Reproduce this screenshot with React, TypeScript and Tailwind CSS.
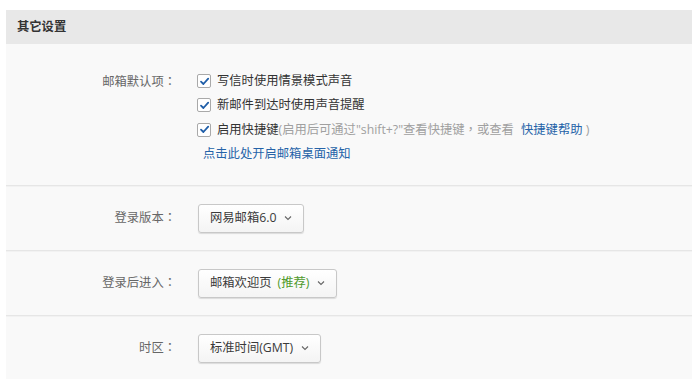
import React from 'react';

const font = { fontFamily: '"Open Sans", "Noto Sans CJK SC", sans-serif' };
const tc = { fontFamily: '"Noto Sans CJK TC", sans-serif' };

const CheckBox = () => (
  <span className="flex h-[14px] w-[14px] shrink-0 items-center justify-center rounded-[2px] border border-[#a9a9a9] bg-white">
    <svg width="11" height="11" viewBox="0 0 11 11">
      <path d="M2 5.6 L4.4 8 L9.2 2.6" fill="none" stroke="#1f5ea8" strokeWidth="1.8" strokeLinecap="round" strokeLinejoin="round" />
    </svg>
  </span>
);

const Chevron = () => (
  <svg width="8" height="6" viewBox="0 0 8 6" className="ml-[8px]">
    <path d="M1 1.5 L4 4.5 L7 1.5" fill="none" stroke="#666" strokeWidth="1.1" />
  </svg>
);

const Select = ({ children }: { children: React.ReactNode }) => (
  <div className="flex h-[29px] items-center rounded-[3px] border border-[#c8c8c8] bg-gradient-to-b from-white to-[#f4f4f4] pl-[11px] pr-[11px] text-[#3a3a3a] shadow-[0_1px_1px_rgba(0,0,0,0.12)]">
    {children}
    <Chevron />
  </div>
);

const Label = ({ text }: { text: string }) => (
  <div className="w-[170px] shrink-0 text-right text-[#666]">
    {text}
    <span style={tc}>：</span>
  </div>
);

const Row = ({ label, children }: { label: string; children: React.ReactNode }) => (
  <div className="flex h-[65px] items-center border-t border-[#e6e6e6] shadow-[inset_0_1px_0_#f2f2f2]">
    <Label text={label} />
    <div className="ml-[22px]">{children}</div>
  </div>
);

const App = () => {
  return (
    <div className="min-h-[379px] bg-white pl-[6px] pt-[10px] text-[12.3px]" style={font}>
      <div className="flex h-[34px] items-center bg-[#e8e8e8] pl-[11px] font-bold text-[#333]">其它设置</div>
      <div className="bg-[#f9f9f9]">
        <div className="flex pb-[19px] pt-[25px] leading-[24px]">
          <Label text="邮箱默认项" />
          <div className="ml-[21px] text-[#333]">
            <div className="flex items-center gap-[6px]">
              <CheckBox />
              <span>写信时使用情景模式声音</span>
            </div>
            <div className="flex items-center gap-[6px]">
              <CheckBox />
              <span>新邮件到达时使用声音提醒</span>
            </div>
            <div className="flex items-center gap-[6px]">
              <CheckBox />
              <span>
                启用快捷键
                <span className="text-[#a0a0a0]">
                  (启用后可通过"shift+?"查看快捷键<span style={tc}>，</span>或查看{' '}
                </span>
                <span className="ml-[4px] text-[#2563a8]">快捷键帮助</span>
                <span className="text-[#a0a0a0]"> )</span>
              </span>
            </div>
            <div className="pl-[6px] text-[#2563a8]">点击此处开启邮箱桌面通知</div>
          </div>
        </div>
        <Row label="登录版本">
          <Select>网易邮箱6.0</Select>
        </Row>
        <Row label="登录后进入">
          <Select>
            邮箱欢迎页<span className="ml-[6px] text-[#4f9a2b]">(推荐)</span>
          </Select>
        </Row>
        <Row label="时区">
          <Select>标准时间(GMT)</Select>
        </Row>
      </div>
    </div>
  );
};

export default App;
